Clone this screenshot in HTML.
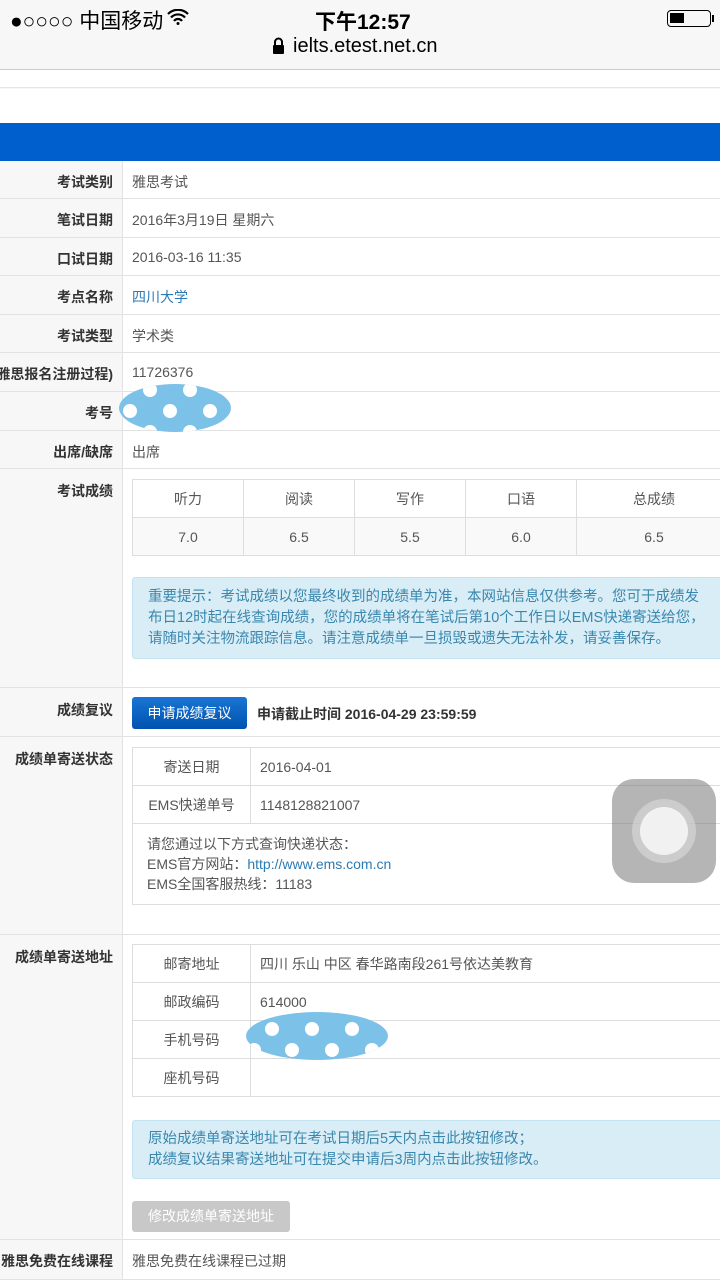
<!DOCTYPE html>
<html><head><meta charset="utf-8"><style>
*{margin:0;padding:0;box-sizing:border-box}
body{width:720px;height:1280px;overflow:hidden;background:#f8f8f8;font-family:"Liberation Sans","Noto Sans CJK SC",sans-serif;position:relative;color:#333}
.a{position:absolute}
.row{position:absolute;left:0;width:720px;border-bottom:1px solid #e2e2e2;background:#fff}
.lab{position:absolute;left:0;top:0;width:123px;height:100%;background:#f7f7f7;border-right:1px solid #e2e2e2;overflow:hidden;font-size:14px;font-weight:bold;color:#333}
.lab span{position:absolute;right:9px;white-space:nowrap}
.val{position:absolute;left:132px;font-size:14px;color:#555}
table{border-collapse:collapse;font-size:14px;color:#555}
td{border:1px solid #ddd;height:38px}
.info{background:#d9edf7;border:1px solid #c4e3f0;color:#3a87ad;font-size:14.5px;border-radius:3px;white-space:nowrap;overflow:hidden}
</style></head><body>
<div class="a" style="left:0;top:0;width:720px;height:70px;background:#f7f7f7;border-bottom:1px solid #ccc"></div>
<div class="a" style="left:10px;top:5px;font-size:21px;color:#000">●○○○○ 中国移动</div>
<svg class="a" style="left:167px;top:9px" width="22" height="16" viewBox="0 0 22 16"><path d="M1 5a14 14 0 0 1 20 0M4 8.5a9.5 9.5 0 0 1 14 0M7 12a5 5 0 0 1 8 0" stroke="#000" stroke-width="2.2" fill="none"/><circle cx="11" cy="14.5" r="1.5"/></svg>
<div class="a" style="left:315px;top:6px;font-size:21px;font-weight:bold;color:#000">下午12:57</div>
<div class="a" style="left:667px;top:10px;width:44px;height:17px;border:1.5px solid #000;border-radius:4px"><div style="margin:2px;width:14px;height:10px;background:#000"></div></div>
<div class="a" style="left:712px;top:15px;width:2px;height:7px;background:#000"></div>
<svg class="a" style="left:272px;top:37px" width="13" height="17"><path d="M3 8V5a3.5 3.5 0 0 1 7 0v3" stroke="#000" stroke-width="2" fill="none"/><rect x="1" y="8" width="11" height="9" rx="1"/></svg>
<div class="a" style="left:293px;top:35px;font-size:20px;color:#000">ielts.etest.net.cn</div>
<div class="a" style="left:0;top:70px;width:720px;height:18px;background:#fff;border-bottom:1px solid #e6e6e6"></div>
<div class="a" style="left:0;top:89px;width:720px;height:34px;background:#fff"></div>
<div class="a" style="left:0;top:123px;width:720px;height:38px;background:#005fcc"></div>

<div class="row" style="top:161px;height:38px"><div class="lab"><span style="top:11px">考试类别</span></div><div class="val" style="top:11px">雅思考试</div></div>
<div class="row" style="top:199px;height:39px"><div class="lab"><span style="top:11px">笔试日期</span></div><div class="val" style="top:11px">2016年3月19日 星期六</div></div>
<div class="row" style="top:238px;height:38px"><div class="lab"><span style="top:11px">口试日期</span></div><div class="val" style="top:11px">2016-03-16 11:35</div></div>
<div class="row" style="top:276px;height:39px"><div class="lab"><span style="top:11px">考点名称</span></div><div class="val" style="top:11px;color:#2a7ab5">四川大学</div></div>
<div class="row" style="top:315px;height:38px"><div class="lab"><span style="top:11px">考试类型</span></div><div class="val" style="top:11px">学术类</div></div>
<div class="row" style="top:353px;height:39px"><div class="lab"><span style="top:11px">(雅思报名注册过程)</span></div><div class="val" style="top:11px">11726376</div></div>
<div class="row" style="top:392px;height:39px"><div class="lab"><span style="top:11px">考号</span></div></div>
<div class="row" style="top:431px;height:38px"><div class="lab"><span style="top:11px">出席/缺席</span></div><div class="val" style="top:11px">出席</div></div>
<div class="row" style="top:469px;height:219px"><div class="lab"><span style="top:12px">考试成绩</span></div></div>
<table class="a" style="left:132px;top:479px;width:600px;text-align:center;background:#fff">
<tr><td style="width:111px">听力</td><td style="width:111px">阅读</td><td style="width:111px">写作</td><td style="width:111px">口语</td><td>总成绩</td></tr>
<tr style="background:#f9f9f9"><td>7.0</td><td>6.5</td><td>5.5</td><td>6.0</td><td>6.5</td></tr></table>
<div class="a info" style="left:132px;top:577px;width:600px;height:82px;padding:9px 0 0 15px;line-height:21px">重要提示：考试成绩以您最终收到的成绩单为准，本网站信息仅供参考。您可于成绩发<br>布日12时起在线查询成绩，您的成绩单将在笔试后第10个工作日以EMS快递寄送给您，<br>请随时关注物流跟踪信息。请注意成绩单一旦损毁或遗失无法补发，请妥善保存。</div>

<div class="row" style="top:688px;height:49px"><div class="lab"><span style="top:12px">成绩复议</span></div></div>
<div class="a" style="left:132px;top:697px;width:115px;height:32px;background:linear-gradient(#1a75d2,#0052b0);border-radius:3px;color:#fff;font-size:14px;text-align:center;line-height:32px">申请成绩复议</div>
<div class="a" style="left:257px;top:704px;font-size:14px;font-weight:bold;color:#333">申请截止时间 2016-04-29 23:59:59</div>

<div class="row" style="top:737px;height:198px"><div class="lab"><span style="top:12px">成绩单寄送状态</span></div></div>
<table class="a" style="left:132px;top:747px;width:600px;background:#fff">
<tr><td style="width:118px;text-align:center">寄送日期</td><td style="padding-left:9px">2016-04-01</td></tr>
<tr><td style="text-align:center">EMS快递单号</td><td style="padding-left:9px">1148128821007</td></tr>
<tr><td colspan="2" style="height:81px;padding-left:14px;line-height:20px;font-size:14px">请您通过以下方式查询快递状态：<br>EMS官方网站：<span style="color:#2a7ab5">http://www.ems.com.cn</span><br>EMS全国客服热线：11183</td></tr></table>

<div class="row" style="top:935px;height:305px"><div class="lab"><span style="top:12px">成绩单寄送地址</span></div></div>
<table class="a" style="left:132px;top:944px;width:600px;background:#fff">
<tr><td style="width:118px;text-align:center">邮寄地址</td><td style="padding-left:9px">四川 乐山 中区 春华路南段261号依达美教育</td></tr>
<tr><td style="text-align:center">邮政编码</td><td style="padding-left:9px">614000</td></tr>
<tr><td style="text-align:center">手机号码</td><td></td></tr>
<tr><td style="text-align:center">座机号码</td><td></td></tr></table>
<div class="a info" style="left:132px;top:1120px;width:600px;height:59px;padding:8px 0 0 15px;line-height:21px">原始成绩单寄送地址可在考试日期后5天内点击此按钮修改；<br>成绩复议结果寄送地址可在提交申请后3周内点击此按钮修改。</div>
<div class="a" style="left:132px;top:1201px;width:158px;height:31px;background:#c8c8c8;border-radius:3px;color:#fff;font-size:14px;text-align:center;line-height:31px">修改成绩单寄送地址</div>

<div class="row" style="top:1240px;height:40px"><div class="lab"><span style="top:11px">雅思免费在线课程</span></div><div class="val" style="top:11px">雅思免费在线课程已过期</div></div>

<svg class="a" style="left:118px;top:382px" width="114" height="52"><defs><clipPath id="c1"><ellipse cx="57" cy="26" rx="56" ry="24"/></clipPath></defs><g clip-path="url(#c1)"><rect width="114" height="52" fill="#7cc1e8"/><g fill="#fff"><circle cx="12" cy="29" r="7"/><circle cx="52" cy="29" r="7"/><circle cx="92" cy="29" r="7"/><circle cx="32" cy="8" r="7"/><circle cx="72" cy="8" r="7"/><circle cx="32" cy="50" r="7"/><circle cx="72" cy="50" r="7"/></g></g></svg>
<svg class="a" style="left:244px;top:1010px" width="146" height="52"><defs><clipPath id="c2"><ellipse cx="73" cy="26" rx="71" ry="24"/></clipPath></defs><g clip-path="url(#c2)"><rect width="146" height="52" fill="#7cc1e8"/><g fill="#fff"><circle cx="28" cy="19" r="7"/><circle cx="68" cy="19" r="7"/><circle cx="108" cy="19" r="7"/><circle cx="48" cy="40" r="7"/><circle cx="88" cy="40" r="7"/><circle cx="128" cy="40" r="7"/><circle cx="10" cy="40" r="7"/></g></g></svg>

<div class="a" style="left:612px;top:779px;width:104px;height:104px;border-radius:22px;background:rgba(120,120,120,0.55)"></div>
<div class="a" style="left:632px;top:799px;width:64px;height:64px;border-radius:50%;background:rgba(220,220,220,0.6)"></div>
<div class="a" style="left:640px;top:807px;width:48px;height:48px;border-radius:50%;background:rgba(245,245,245,0.9)"></div>
</body></html>
